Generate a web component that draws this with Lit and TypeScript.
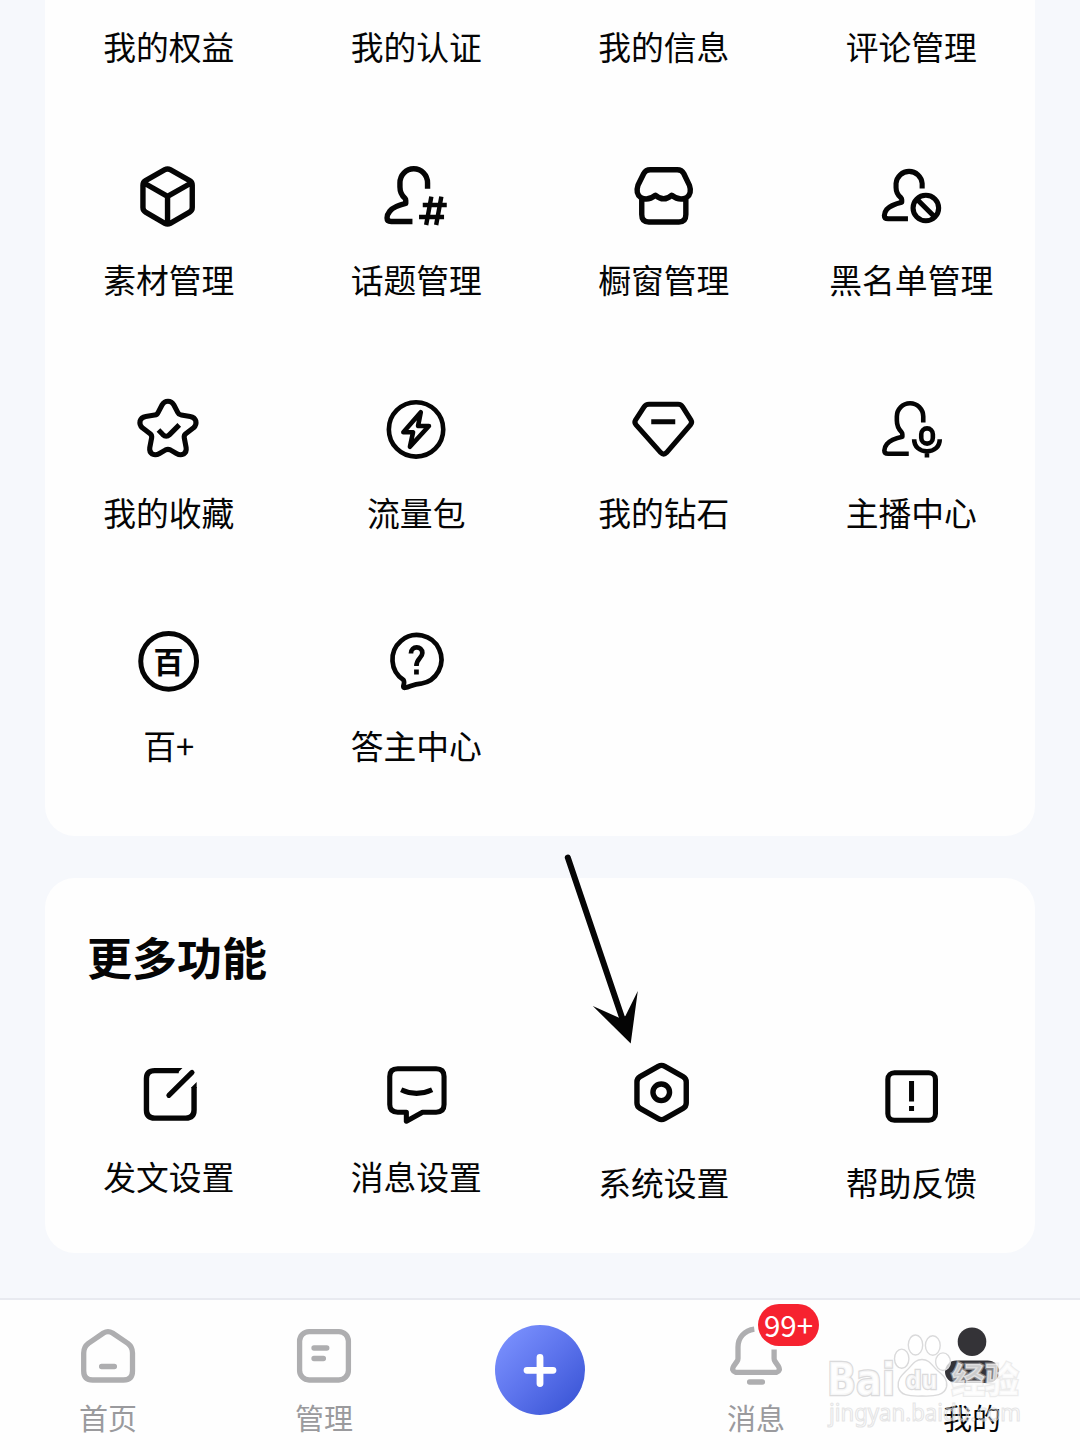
import { LitElement, html, svg, css, SVGTemplateResult } from "lit";
import { customElement, property } from "lit/decorators.js";

// Icon strokes are plotted on one shared canvas; each icon shows its own 72x72 window of it.
interface Entry {
  label: string;
  x: number;
  y: number;
  art: SVGTemplateResult;
  low?: boolean;
}

const COLS = [132.75, 380.25, 627.75, 875.25];

const FIRST_ROW = ["我的权益", "我的认证", "我的信息", "评论管理"];

const TOOLS: Entry[] = [
  {
    label: "素材管理", x: COLS[0], y: 160,
    art: svg`<path d="M164.6 169.7Q167.3 168.2 170 169.7L189.4 180.7Q192 182.2 192 185.2V207.6Q192 210.6 189.4 212.1L170 223.3Q167.3 224.8 164.6 223.3L145.3 212.1Q142.7 210.6 142.7 207.6V185.2Q142.7 182.2 145.3 180.7Z M143.8 183L167.3 196.4L190.9 183 M167.3 196.4V224"/>`,
  },
  {
    label: "话题管理", x: COLS[1], y: 160,
    art: svg`<path d="M427.8 188.7V183A13.8 14.2 0 0 0 400.2 183V187C400.2 193 402.3 195.8 405.2 198.3Q406 199.2 406 200.5V203.4Q394 206.2 390 211.2Q387.3 214.5 387.3 218Q387.3 221.5 391.5 221.5H412.7"/><path stroke-width="4.4" d="M423 205H447M419.3 217H444.3M431.6 196.7L426.4 225M441.6 196.7L436.4 225"/>`,
  },
  {
    label: "橱窗管理", x: COLS[2], y: 160,
    art: svg`<path d="M650 169.8H677Q681.5 169.8 683.5 173.5L689.2 185.3Q692 193.5 686.3 197.6Q679 201.5 671.4 195.2Q663.4 202.4 655.3 195.2Q647.5 201.5 640.6 197.6Q635 193.5 637.7 185.3L643.5 173.5Q645.5 169.8 650 169.8ZM641.5 199V214.5Q641.5 222 648.5 222H678.7Q685.6 222 685.6 214.5V199"/>`,
  },
  {
    label: "黑名单管理", x: COLS[3], y: 160,
    art: svg`<g stroke-width="5.1"><path d="M922.4 188.6V183.4A13.1 13.2 0 0 0 896.3 183.4V187.4C896.3 193 898.4 195.4 901.2 197.8Q902 198.6 902 199.8V202.2Q890.7 205 887 209.4Q884.6 212.4 884.6 215.4Q884.6 218.7 888.4 218.7H908.2"/><circle cx="926.1" cy="208" r="12.8"/><path d="M917.2 199.2L935 217"/></g>`,
  },
  {
    label: "我的收藏", x: COLS[0], y: 393,
    art: svg`<path stroke-width="5.1" d="M161.9 404.8Q163.9 401.3 167.7 401.3Q171.5 401.3 173.5 404.8L177.6 412.6Q178.6 414.7 181 415.1L189.9 416.5Q194.5 417.3 195.6 421Q196.5 424.8 193.3 427.8L185.5 433.8Q183.6 435.4 184 437.8L185.9 447.8Q186.5 452 183.4 454Q180 455.6 176.2 453.5L170 449.9Q167.7 448.8 165.4 449.9L159.2 453.5Q155.4 455.6 152 454Q148.9 452 149.5 447.8L151.4 437.8Q151.8 435.4 149.9 433.8L142.1 427.8Q138.9 424.8 139.8 421Q140.9 417.3 145.5 416.5L154.4 415.1Q156.8 414.7 157.8 412.6ZM158.2 430L162.6 434.6Q166 438 169.3 434.6L179 424.9"/>`,
  },
  {
    label: "流量包", x: COLS[1], y: 393,
    art: svg`<g stroke-width="4.6"><circle cx="416.3" cy="429.4" r="27.2"/><path d="M421 412.3L418.3 426H429.2L410.2 446.8L413.3 432.2H403.6Z"/></g>`,
  },
  {
    label: "我的钻石", x: COLS[2], y: 393,
    art: svg`<path stroke-width="5.1" d="M648.8 404.3H677.9Q680.9 404.3 682.4 406.9L690.6 419.8Q692.2 422.5 690.2 424.9L666.3 452.6Q663.4 455.6 660.5 452.6L635.8 424.9Q633.8 422.5 635.4 419.8L643.8 406.9Q645.4 404.3 648.8 404.3ZM651 421.8H675"/>`,
  },
  {
    label: "主播中心", x: COLS[3], y: 393,
    art: svg`<g stroke-width="4.6"><path d="M923.5 422.4V416.6A13.2 13.3 0 0 0 897.1 416.6V420.6C897.1 427 899.2 429.6 901.8 432.2Q902.6 433 902.6 434.2V436.8Q891.2 439.4 887.2 444Q884.6 447.2 884.6 450.4Q884.6 453.7 888.4 453.7H909"/><rect x="921.5" y="428.4" width="11.6" height="15.2" rx="5.8"/><path d="M914.4 439.2C914.4 447 920 451.2 927.2 451.2C934.4 451.2 940 447 940 439.2M927.2 451V457.4"/></g>`,
  },
  {
    label: "百+", x: COLS[0], y: 626,
    art: svg`<circle stroke-width="5" cx="168.4" cy="661.3" r="27.9"/><text class="glyph" x="168.2" y="673" text-anchor="middle">百</text>`,
  },
  {
    label: "答主中心", x: COLS[1], y: 626,
    art: svg`<g stroke-width="4.7"><path d="M403.8 680A24.5 24.5 0 1 1 421 683.7C414 684 411 686.5 405.4 687.8Q403 688.2 403.6 685.8Q405 682.5 403.8 680Z"/><path d="M411.2 653.5C411.2 645.5 422.6 645.5 422.6 653C422.6 658 416.7 658.5 416.7 666M416.7 669.6V674.4"/></g>`,
  },
];

const MORE: Entry[] = [
  {
    label: "发文设置", x: COLS[0], y: 1057,
    art: svg`<path d="M178.5 1070.6H154.5Q146.2 1070.6 146.2 1078.6V1110Q146.2 1118.1 154.5 1118.1H185.5Q193.8 1118.1 193.8 1110V1087"/><path class="solid" d="M177 1068H182.2L177 1073.2ZM196.4 1082V1088H191.2V1087.2Z"/><path stroke-width="5" stroke-linecap="round" d="M168.6 1095.4L191.8 1072.4"/>`,
  },
  {
    label: "消息设置", x: COLS[1], y: 1057,
    art: svg`<path stroke-width="5.1" d="M398 1068.7H436.3Q444.3 1068.7 444.3 1076.5V1104.6Q444.3 1112.3 436.3 1112.3H422.8L406.6 1121.2V1112.3H398Q390 1112.3 390 1104.6V1076.5Q390 1068.7 398 1068.7ZM401.4 1089.8Q416.7 1097 432.4 1089.8"/>`,
  },
  {
    label: "系统设置", x: COLS[2], y: 1057, low: true,
    art: svg`<path d="M658 1066.3Q661.3 1064.5 664.6 1066.3L682.8 1076.6Q686 1078.4 686 1082V1103Q686 1106.6 682.8 1108.4L664.6 1118.7Q661.3 1120.5 658 1118.7L639.8 1108.4Q636.7 1106.6 636.7 1103V1082Q636.7 1078.4 639.8 1076.6Z"/><circle cx="661" cy="1092.3" r="8.3"/>`,
  },
  {
    label: "帮助反馈", x: COLS[3], y: 1057, low: true,
    art: svg`<rect stroke-width="5.1" x="888.1" y="1072.7" width="47.6" height="47.6" rx="6.6"/><path stroke-width="5" d="M911.8 1081V1101.6M911.8 1106V1111"/>`,
  },
];

@customElement("tool-cell")
class ToolCell extends LitElement {
  @property({ attribute: false }) entry!: Entry;

  static styles = css`
    :host { display: flex; flex-direction: column; align-items: center; }
    .icon {
      display: block; width: 72px; height: 72px; overflow: visible;
      fill: none; stroke: #050505; stroke-width: 5.4; stroke-linejoin: round;
    }
    .solid { fill: #050505; stroke: none; }
    .glyph {
      font: 700 30px "Noto Sans CJK SC", sans-serif;
      fill: #050505; stroke: none;
    }
    .label { margin-top: 23px; padding-bottom: 2px; line-height: 48px; white-space: nowrap; }
    .label.low { margin-top: 29px; }
  `;

  render() {
    const { x, y, art, label, low } = this.entry;
    return html`
      <svg class="icon" viewBox="${x} ${y} 72 72">${art}</svg>
      <span class="label ${low ? "low" : ""}">${label}</span>
    `;
  }
}

@customElement("tab-bar")
class TabBar extends LitElement {
  static styles = css`
    :host {
      display: grid; grid-template-columns: repeat(5, 1fr);
      height: 150px; background: #fefefe; border-top: 2px solid #e8eaf0;
      color: #9a9a9d; font-size: 29px;
    }
    .tab { display: flex; flex-direction: column; align-items: center; padding-top: 20px; }
    .icon {
      display: block; width: 72px; height: 72px; overflow: visible;
      fill: none; stroke: #aeaeb0; stroke-width: 5.3; stroke-linecap: round; stroke-linejoin: round;
    }
    .cut { stroke-linecap: butt; }
    .me { fill: #343337; stroke: none; }
    .label { margin-top: 3px; line-height: 44px; }
    .active { color: #050505; }
    .plus {
      width: 90px; height: 90px; border-radius: 50%; margin-top: 5px;
      background: linear-gradient(135deg, #7d93ff 5%, #5c73ec 50%, #3853d4 95%);
    }
    .plus-icon { display: block; width: 90px; height: 90px; stroke: #fff; stroke-width: 6.8; stroke-linecap: round; }
    .bell { position: relative; }
    .badge {
      position: absolute; left: 38px; top: -16px; width: 61px; height: 42px;
      border-radius: 21px; background: #f6222f; box-shadow: 0 0 0 2px #fefefe;
      color: #fff; font-size: 29.5px; line-height: 41px; text-align: center;
    }
  `;

  render() {
    return html`
      <div class="tab">
        <svg class="icon" viewBox="72 1320 72 72">
          <path d="M103.5 1333Q108 1330.3 112.5 1333L127.8 1343.4Q132.5 1347 132.5 1353V1371Q132.5 1380 123.5 1380H92.7Q83.7 1380 83.7 1371V1353Q83.7 1347 88.4 1343.4ZM101.6 1366.5H114.4" />
        </svg>
        <span class="label">首页</span>
      </div>
      <div class="tab">
        <svg class="icon" viewBox="288 1320 72 72">
          <rect x="299.6" y="1331.6" width="48.8" height="48.4" rx="9.5" />
          <path d="M314 1348H326.8M314 1358.5H323.4" />
        </svg>
        <span class="label">管理</span>
      </div>
      <div class="tab">
        <div class="plus">
          <svg class="plus-icon" viewBox="0 0 90 90"><path d="M45 32.5V58.5M32 45.3H58" /></svg>
        </div>
      </div>
      <div class="tab">
        <div class="bell">
          <svg class="icon" viewBox="720 1320 72 72">
            <path class="cut" d="M754.3 1329.2C744.5 1330.5 738 1337.5 738 1347V1358.5Q738 1360 737 1361.4L733.6 1366.2Q731 1370.8 735.6 1372.3H776.6Q781 1370.8 778.4 1366.2L775 1361.4Q774.1 1360 774.1 1358.5V1349.4" />
            <path d="M749.6 1382H762.4" />
          </svg>
          <span class="badge">99+</span>
        </div>
        <span class="label">消息</span>
      </div>
      <div class="tab">
        <svg class="icon" viewBox="936 1320 72 72">
          <circle class="me" cx="972" cy="1341.7" r="14.3" />
          <rect class="me" x="945" y="1360.4" width="54" height="22.6" rx="11.3" />
        </svg>
        <span class="label active">我的</span>
      </div>
    `;
  }
}

@customElement("app-root")
class AppRoot extends LitElement {
  static styles = css`
    :host {
      display: flex; flex-direction: column; position: relative;
      width: 1080px; height: 1450px; box-sizing: border-box; overflow: hidden;
      background: #f6f8fc; color: #050505;
      font-family: "Noto Sans CJK SC", sans-serif; font-size: 32.8px;
    }
    .card { margin: 0 45px; background: #fefefe; border-radius: 30px; }
    .services { height: 836px; box-sizing: border-box; padding-top: 22px; border-radius: 0 0 30px 30px; }
    .more { margin-top: 42px; height: 375px; }
    .grid { display: grid; grid-template-columns: repeat(4, 1fr); row-gap: 88px; }
    .plain { text-align: center; line-height: 48px; padding-bottom: 2px; }
    .title { margin: 0; padding: 46px 0 0 42px; font-size: 45px; font-weight: 700; line-height: 66px; }
    .more-grid { padding-top: 67px; }
    .tabs { margin-top: auto; }
    .overlay { position: absolute; left: 0; top: 0; pointer-events: none; }
    .mark { fill: #fff; fill-opacity: 0.75; stroke: #dadadb; stroke-width: 1.4; }
    .wide { stroke-width: 2.6; paint-order: stroke; }
    .brand { font: 700 44px "DejaVu Sans", sans-serif; }
    .brand-small { font: 700 24px "DejaVu Sans", sans-serif; }
    .brand-cjk { font: 900 35px "Noto Sans CJK SC", sans-serif; stroke-opacity: 0.5; }
    .site { font: 400 24px "Noto Sans", sans-serif; stroke-width: 1.2; stroke-opacity: 0.7; fill-opacity: 0.2; }
  `;

  render() {
    return html`
      <section class="card services">
        <div class="grid">
          ${FIRST_ROW.map((t) => html`<span class="plain">${t}</span>`)}
          ${TOOLS.map((e) => html`<tool-cell .entry=${e}></tool-cell>`)}
        </div>
      </section>
      <section class="card more">
        <h2 class="title">更多功能</h2>
        <div class="grid more-grid">
          ${MORE.map((e) => html`<tool-cell .entry=${e}></tool-cell>`)}
        </div>
      </section>
      <tab-bar class="tabs"></tab-bar>
      <svg class="overlay" width="1080" height="1450" viewBox="0 0 1080 1450">
        <path d="M567.8 857.5L622.5 1019" stroke="#050505" stroke-width="6" stroke-linecap="round" />
        <path d="M630.7 1043.5L592.8 1006L619.6 1018L625.4 1016L637.8 991Z" fill="#050505" />
        <g class="mark">
          <text class="brand wide" x="827" y="1394.5" textLength="68" lengthAdjust="spacingAndGlyphs">Bai</text>
          <ellipse cx="901.7" cy="1358.7" rx="7.2" ry="9.6" />
          <ellipse cx="915.5" cy="1345" rx="7.2" ry="10" />
          <ellipse cx="932.8" cy="1345.5" rx="7.4" ry="9.8" />
          <ellipse cx="943" cy="1361.7" rx="7.4" ry="8.8" />
          <path d="M922 1359.5C930 1359.5 932 1366 938 1371C944 1376 948 1380 946.5 1387C944.5 1395 936 1396.5 922 1396C908 1396.5 900 1395 898.2 1387C897 1380 901 1376 906 1371C912 1366 914 1359.5 922 1359.5Z" />
          <text class="brand-small wide" x="905.5" y="1389" textLength="32" lengthAdjust="spacingAndGlyphs">du</text>
          <text class="brand-cjk wide" x="951.5" y="1392.5" textLength="67" lengthAdjust="spacingAndGlyphs">经验</text>
          <text class="site" x="829" y="1420.7" textLength="192" lengthAdjust="spacingAndGlyphs">jingyan.baidu.com</text>
        </g>
      </svg>
    `;
  }
}
